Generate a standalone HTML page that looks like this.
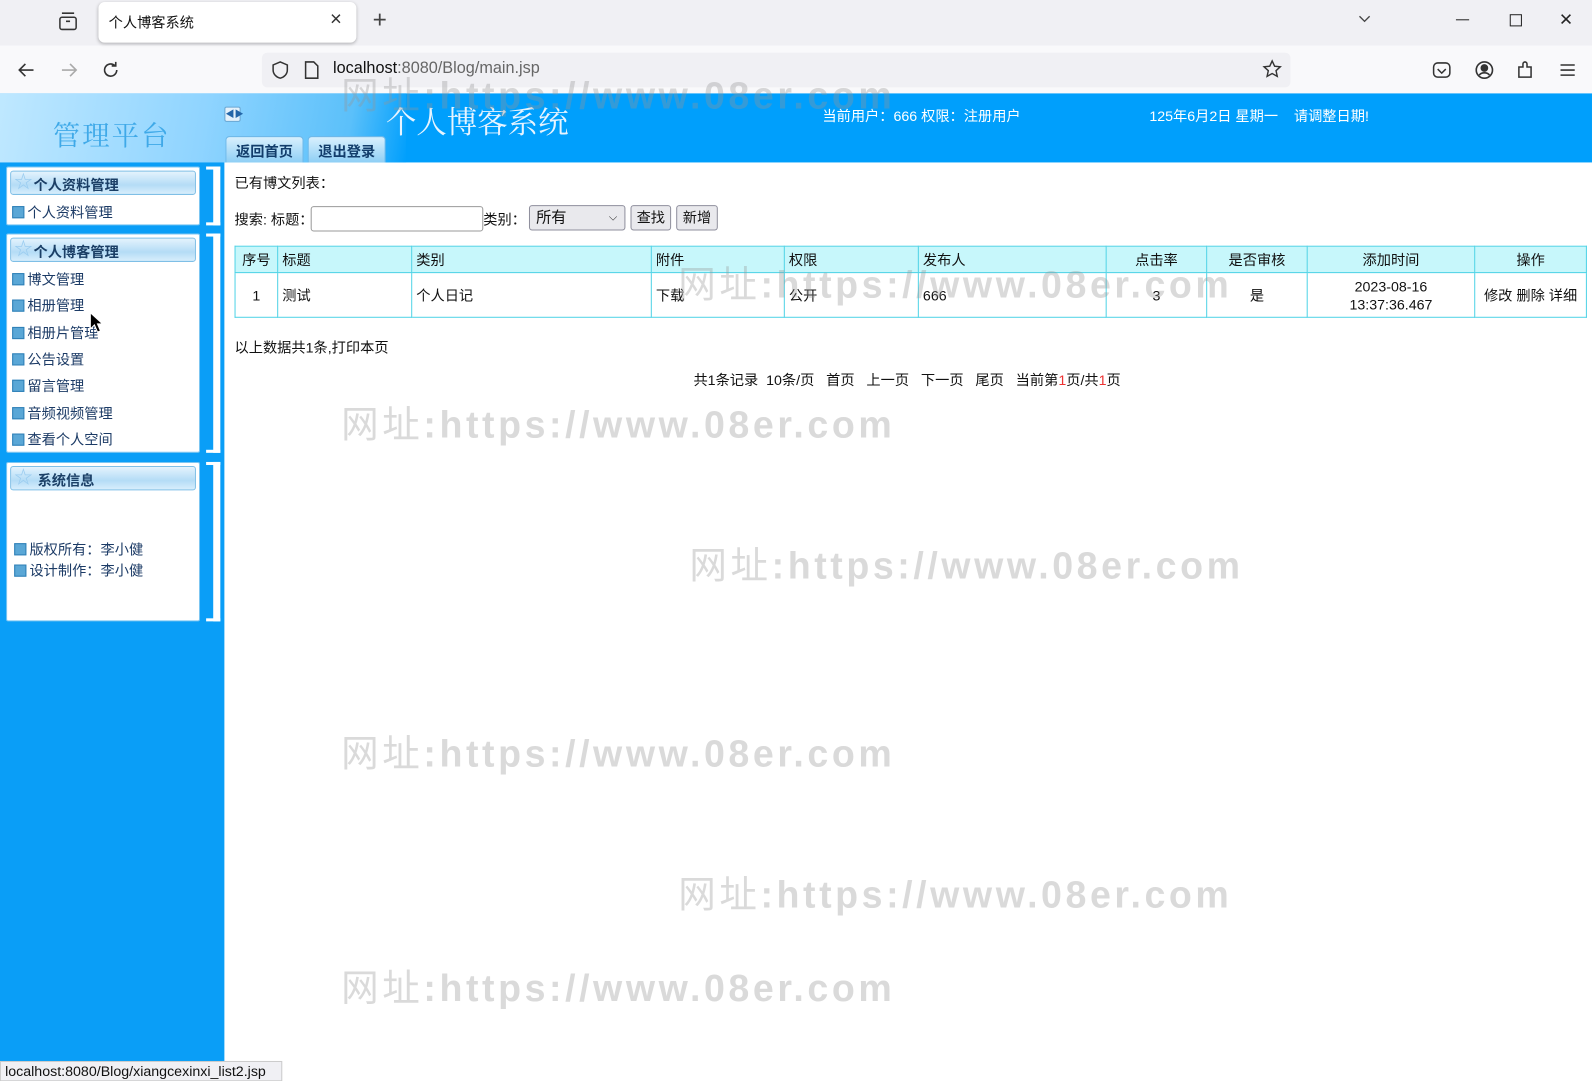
<!DOCTYPE html>
<html><head><meta charset="utf-8">
<style>
*{margin:0;padding:0;box-sizing:border-box}
html,body{width:1592px;height:1080px;overflow:hidden;background:#fff}
#w{position:absolute;left:0;top:0;width:1568px;height:1064px;transform:scale(1.0153);transform-origin:0 0;font-family:"Liberation Sans","Noto Sans CJK SC",sans-serif;font-size:14px;color:#111}
.a{position:absolute}
.tabbar{left:0;top:0;width:1568px;height:45px;background:#f0f0f4}
.toolbar{left:0;top:45px;width:1568px;height:47px;background:#f9f9fb}
.tab{left:97px;top:2px;width:254px;height:40px;background:#fff;border-radius:6px;box-shadow:0 1px 3px rgba(0,0,0,.25)}
.url{left:258px;top:52px;width:1013px;height:34px;background:#f0f0f4;border-radius:5px}
.side{left:0;top:92px;width:221px;height:972px;background:#0a9ef7}
.hdr{left:221px;top:92px;width:1347px;height:68px;background:#009ffc}
.hdrl{left:0;top:92px;width:400px;height:68px;background:linear-gradient(100deg,#bfe8ff 0%,#8fd4ff 50%,#5bc0fa 85%,#009ffc 100%)}
.box{background:#fff;border:1px solid #7cc6f2;border-radius:2px}
.bh{position:absolute;left:3px;top:3px;right:3px;height:24px;border:1px solid #7fbfe6;border-radius:3px;background:linear-gradient(#e4f3fd,#b4dcf6 60%,#d7eefc);font-weight:bold;color:#1b3f66;font-size:14px;line-height:26px;padding-left:22px}
.bh:before{content:"\2606";position:absolute;left:3px;top:-3px;color:#9ccdf0;font-size:18px}
.it{position:absolute;left:5px;color:#1c3b66;font-size:14px;padding-left:15px}
.it:before{content:"";position:absolute;left:0;top:4px;width:10px;height:10px;background:#5aa7d6;border:1px solid #2e7fb6}
.br{background:#fff}
.btn{top:134px;height:26px;background:linear-gradient(#d9f0fd,#8ecff5);border:1px solid #6fb8e8;border-bottom:none;border-radius:4px 4px 0 0;font-weight:bold;color:#123d6b;font-size:14px;text-align:center;line-height:28px}
table{border-collapse:collapse;position:absolute;left:231px;top:242px;width:1332px}
td{border:1px solid #4fd3e6;font-size:14px;padding:0 4px}
tr.h td{background:#c7f7fb;height:26px}
tr.d td{height:44px}
.wm{position:absolute;color:rgba(150,150,150,.35);font-size:37px;font-weight:bold;letter-spacing:3.5px;white-space:nowrap}
.wm span{font-weight:normal}
.sb{border:1px solid #8f8f9d;border-radius:3px;background:#e9e9ed;font-size:14px;text-align:center;line-height:23px}
</style></head><body><div id="w">
<div class="a tabbar"></div>
<div class="a toolbar"></div>
<svg class="a" style="left:57px;top:11px" width="20" height="20" viewBox="0 0 20 20" fill="none" stroke="#333" stroke-width="1.5"><rect x="2" y="6" width="16" height="12" rx="2"/><path d="M4 2h12M8 10h4"/></svg>
<div class="a tab"></div>
<div class="a" style="left:107px;top:12px;font-size:14px">个人博客系统</div>
<div class="a" style="left:325px;top:8px;font-size:20px;color:#333">×</div>
<div class="a" style="left:367px;top:6px;font-size:24px;color:#444">+</div>
<svg class="a" style="left:1337px;top:14px" width="14" height="10" viewBox="0 0 14 10" fill="none" stroke="#444" stroke-width="1.3"><path d="M2 2l5 5 5-5"/></svg>
<div class="a" style="left:1434px;top:19px;width:13px;height:1px;background:#222"></div>
<div class="a" style="left:1487px;top:14px;width:12px;height:12px;border:1px solid #222"></div>
<div class="a" style="left:1536px;top:6px;font-size:22px;color:#222">×</div>
<svg class="a" style="left:15px;top:58px" width="22" height="22" viewBox="0 0 22 22" fill="none" stroke="#333" stroke-width="1.6"><path d="M18 11H4M10 5l-6 6 6 6"/></svg>
<svg class="a" style="left:57px;top:58px" width="22" height="22" viewBox="0 0 22 22" fill="none" stroke="#aaa" stroke-width="1.6"><path d="M4 11h14M12 5l6 6-6 6"/></svg>
<svg class="a" style="left:98px;top:58px" width="22" height="22" viewBox="0 0 22 22" fill="none" stroke="#333" stroke-width="1.6"><path d="M17 11a6 6 0 1 1-2-4.5M16 3v4h-4"/></svg>
<div class="a url"></div>
<svg class="a" style="left:266px;top:59px" width="20" height="20" viewBox="0 0 20 20" fill="none" stroke="#333" stroke-width="1.5"><path d="M10 2l7 3v5c0 4-3 7-7 8-4-1-7-4-7-8V5z"/></svg>
<svg class="a" style="left:298px;top:59px" width="18" height="20" viewBox="0 0 18 20" fill="none" stroke="#333" stroke-width="1.5"><path d="M3 2h8l4 4v12H3z"/></svg>
<div class="a" style="left:328px;top:59px;font-size:16px;color:#111">localhost<span style="color:#666">:8080/Blog/main.jsp</span></div>
<svg class="a" style="left:1243px;top:58px" width="20" height="20" viewBox="0 0 20 20" fill="none" stroke="#333" stroke-width="1.4"><path d="M10 2l2.4 5.2 5.6.6-4.2 3.8 1.2 5.6L10 14.4 5 17.2l1.2-5.6L2 7.8l5.6-.6z"/></svg>
<svg class="a" style="left:1410px;top:59px" width="20" height="20" viewBox="0 0 20 20" fill="none" stroke="#333" stroke-width="1.5"><rect x="2" y="3" width="16" height="14" rx="4"/><path d="M6 9l4 4 4-4"/></svg>
<svg class="a" style="left:1452px;top:59px" width="20" height="20" viewBox="0 0 20 20" fill="none" stroke="#333" stroke-width="1.6"><circle cx="10" cy="10" r="8"/><circle cx="10" cy="8" r="3" fill="#333"/><path d="M5 15c2-3 8-3 10 0"/></svg>
<svg class="a" style="left:1493px;top:58px" width="20" height="22" viewBox="0 0 20 22" fill="none" stroke="#333" stroke-width="1.5"><path d="M3 8h4V5a2 2 0 0 1 4 0v3h4v10H3z"/></svg>
<svg class="a" style="left:1535px;top:60px" width="18" height="18" viewBox="0 0 18 18" stroke="#333" stroke-width="1.5"><path d="M2 4h14M2 9h14M2 14h14"/></svg>

<div class="a side"></div>
<div class="a hdr"></div>
<div class="a hdrl"></div>
<div class="a" style="left:52px;top:112px;font-size:27px;color:#3fa9e8;font-family:'Noto Serif CJK SC',serif;letter-spacing:2px">管理平台</div>
<div class="a" style="left:221px;top:105px;width:16px;height:15px;background:#e3f1fb;border:1px solid #6aa6d2;border-radius:2px;font-size:9px;color:#2466a8;text-align:center;line-height:13px">◀▶</div>
<div class="a" style="left:380px;top:96px;font-size:30px;color:#e7f4ff;font-family:'Noto Serif CJK SC',serif">个人博客系统</div>
<div class="a btn" style="left:222px;width:77px">返回首页</div>
<div class="a btn" style="left:303px;width:77px">退出登录</div>
<div class="a" style="left:810px;top:104px;color:#fff;font-size:14px">当前用户：666 权限：注册用户</div>
<div class="a" style="left:1132px;top:104px;color:#fff;font-size:14px">125年6月2日 星期一&nbsp;&nbsp;&nbsp;&nbsp;请调整日期!</div>

<div class="a box" style="left:6px;top:164px;width:191px;height:58px"><div class="bh">个人资料管理</div><div class="it" style="top:34px">个人资料管理</div></div>
<div class="a box" style="left:6px;top:230px;width:191px;height:216px"><div class="bh">个人博客管理</div>
<div class="it" style="top:34px">博文管理</div><div class="it" style="top:60px">相册管理</div><div class="it" style="top:87px">相册片管理</div><div class="it" style="top:113px">公告设置</div><div class="it" style="top:139px">留言管理</div><div class="it" style="top:166px">音频视频管理</div><div class="it" style="top:192px">查看个人空间</div></div>
<div class="a box" style="left:6px;top:455px;width:191px;height:157px"><div class="bh" style="padding-left:26px">系统信息</div>
<div class="it" style="top:75px;left:7px;padding-left:15px">版权所有：李小健</div><div class="it" style="top:96px;left:7px;padding-left:15px">设计制作：李小健</div></div>
<div class="a br" style="left:210px;top:164px;width:7px;height:58px"></div><div class="a br" style="left:203px;top:164px;width:14px;height:3px"></div><div class="a br" style="left:203px;top:219px;width:14px;height:3px"></div>
<div class="a br" style="left:210px;top:230px;width:7px;height:216px"></div><div class="a br" style="left:203px;top:230px;width:14px;height:3px"></div><div class="a br" style="left:203px;top:443px;width:14px;height:3px"></div>
<div class="a br" style="left:210px;top:455px;width:7px;height:157px"></div><div class="a br" style="left:203px;top:455px;width:14px;height:3px"></div><div class="a br" style="left:203px;top:609px;width:14px;height:3px"></div>

<div class="a" style="left:231px;top:170px">已有博文列表：</div>
<div class="a" style="left:231px;top:206px">搜索: 标题：</div>
<div class="a" style="left:306px;top:203px;width:170px;height:25px;border:1px solid #999;border-radius:3px"></div>
<div class="a" style="left:476px;top:206px">类别：</div>
<div class="a sb" style="left:521px;top:202px;width:95px;height:25px;text-align:left;padding-left:6px;font-size:15px">所有<span style="position:absolute;right:7px;font-size:11px">⌵</span></div>
<div class="a sb" style="left:621px;top:202px;width:40px;height:25px">查找</div>
<div class="a sb" style="left:666px;top:202px;width:41px;height:25px">新增</div>

<table>
<tr class="h"><td style="width:42px;text-align:center">序号</td><td style="width:132px">标题</td><td style="width:236px">类别</td><td style="width:131px">附件</td><td style="width:132px">权限</td><td style="width:185px">发布人</td><td style="width:99px;text-align:center">点击率</td><td style="width:99px;text-align:center">是否审核</td><td style="width:165px;text-align:center">添加时间</td><td style="text-align:center">操作</td></tr>
<tr class="d"><td style="text-align:center">1</td><td>测试</td><td>个人日记</td><td>下载</td><td>公开</td><td>666</td><td style="text-align:center">3</td><td style="text-align:center">是</td><td style="text-align:center;line-height:18px">2023-08-16<br>13:37:36.467</td><td style="text-align:center">修改 删除 详细</td></tr>
</table>
<div class="a" style="left:231px;top:332px">以上数据共1条,打印本页</div>
<div class="a" style="left:683px;top:364px;white-space:pre">共1条记录  10条/页   首页   上一页   下一页   尾页   当前第<span style="color:#e33">1</span>页/共<span style="color:#e33">1</span>页</div>

<div class="wm" style="left:336px;top:64px"><span>网址</span>:https://www.08er.com</div>
<div class="wm" style="left:668px;top:250px"><span>网址</span>:https://www.08er.com</div>
<div class="wm" style="left:336px;top:388px"><span>网址</span>:https://www.08er.com</div>
<div class="wm" style="left:679px;top:527px"><span>网址</span>:https://www.08er.com</div>
<div class="wm" style="left:336px;top:712px"><span>网址</span>:https://www.08er.com</div>
<div class="wm" style="left:668px;top:851px"><span>网址</span>:https://www.08er.com</div>
<div class="wm" style="left:336px;top:943px"><span>网址</span>:https://www.08er.com</div>

<svg class="a" style="left:88px;top:307px" width="14" height="22" viewBox="0 0 14 22"><path d="M1 1v16l4-4 3 7 3-1-3-7h5z" fill="#000" stroke="#fff"/></svg>
<div class="a" style="left:0;top:1045px;width:278px;height:20px;background:#f0f0f4;border:1px solid #ccc;font-size:14px;padding-left:4px;line-height:19px">localhost:8080/Blog/xiangcexinxi_list2.jsp</div>
</div></body></html>
